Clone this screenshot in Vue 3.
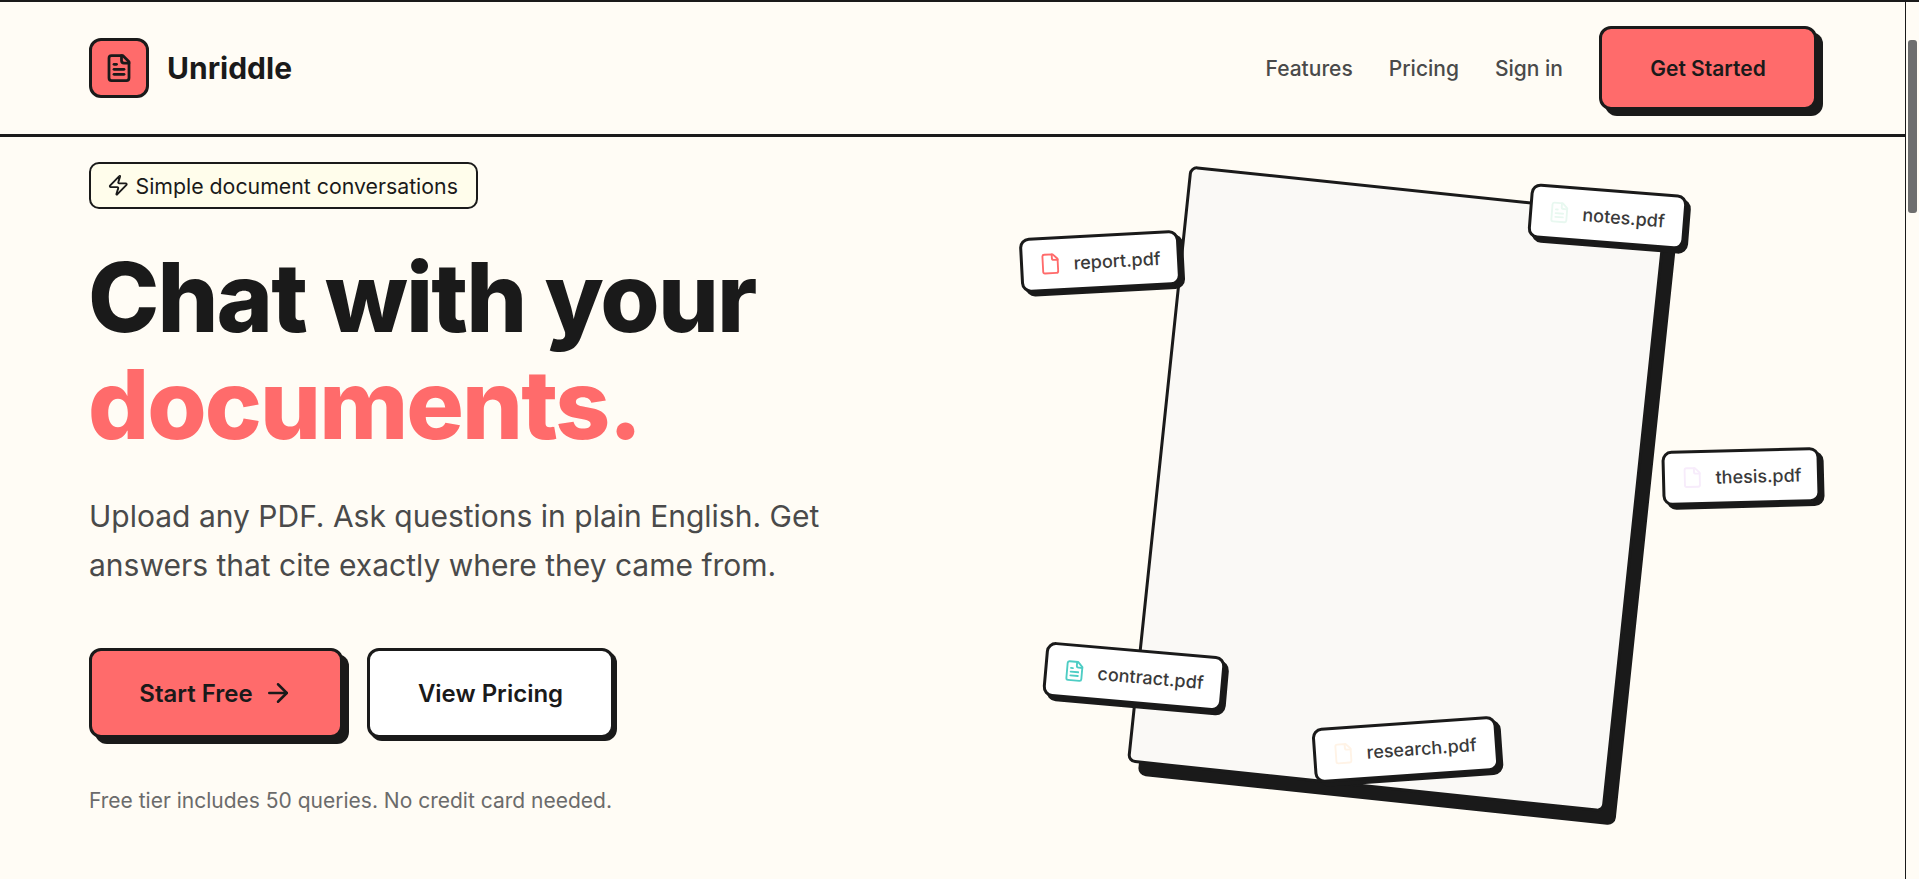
<script setup>
const chips = [
  { name: 'report.pdf', cls: 'report', lines: false },
  { name: 'notes.pdf', cls: 'notes', lines: true },
  { name: 'thesis.pdf', cls: 'thesis', lines: false },
  { name: 'contract.pdf', cls: 'contract', lines: true },
  { name: 'research.pdf', cls: 'research', lines: false },
]
</script>

<template>
  <div class="root">
    <div class="page">
      <header class="nav">
        <div class="brand">
          <span class="logo">
            <svg width="30" height="30" viewBox="0 0 24 24" fill="none" stroke="#1a1a1a" stroke-width="2.2" stroke-linecap="round" stroke-linejoin="round">
              <path d="M15 2H6a2 2 0 0 0-2 2v16a2 2 0 0 0 2 2h12a2 2 0 0 0 2-2V7Z" />
              <path d="M14 2v4a2 2 0 0 0 2 2h4" />
              <path d="M10 9H8" /><path d="M16 13H8" /><path d="M16 17H8" />
            </svg>
          </span>
          <span class="name">Unriddle</span>
        </div>
        <nav class="links">
          <a>Features</a>
          <a>Pricing</a>
          <a>Sign in</a>
          <button class="btn small coral">Get Started</button>
        </nav>
      </header>

      <main class="hero">
        <section class="copy">
          <div class="badge">
            <svg width="22.5" height="22.5" viewBox="0 0 24 24" fill="none" stroke="#1a1a1a" stroke-width="2" stroke-linecap="round" stroke-linejoin="round">
              <path d="M4 14a1 1 0 0 1-.78-1.63l9.9-10.2a.5.5 0 0 1 .86.46l-1.92 6.02A1 1 0 0 0 13 10h7a1 1 0 0 1 .78 1.63l-9.9 10.2a.5.5 0 0 1-.86-.46l1.92-6.02A1 1 0 0 0 11 14z" />
            </svg>
            <span>Simple document conversations</span>
          </div>
          <h1>Chat with your<br /><em>documents.</em></h1>
          <p class="lead">Upload any PDF. Ask questions in plain English. Get answers that cite exactly where they came from.</p>
          <div class="actions">
            <button class="btn big coral">
              Start Free
              <svg width="30" height="30" viewBox="0 0 24 24" fill="none" stroke="#1a1a1a" stroke-width="2" stroke-linecap="round" stroke-linejoin="round">
                <path d="M5 12h14" /><path d="m12 5 7 7-7 7" />
              </svg>
            </button>
            <button class="btn big white">View Pricing</button>
          </div>
          <p class="note">Free tier includes 50 queries. No credit card needed.</p>
        </section>

        <section class="scene">
          <div class="sheet"></div>
          <div v-for="c in chips" :key="c.name" class="chip" :class="c.cls">
            <svg width="22.5" height="22.5" viewBox="0 0 24 24" fill="none" stroke="currentColor" stroke-width="2" stroke-linecap="round" stroke-linejoin="round">
              <path d="M15 2H6a2 2 0 0 0-2 2v16a2 2 0 0 0 2 2h12a2 2 0 0 0 2-2V7Z" />
              <path d="M14 2v4a2 2 0 0 0 2 2h4" />
              <template v-if="c.lines">
                <path d="M10 9H8" /><path d="M16 13H8" /><path d="M16 17H8" />
              </template>
            </svg>
            <span>{{ c.name }}</span>
          </div>
        </section>
      </main>
    </div>

    <aside class="bar"><div class="thumb"></div></aside>
  </div>
</template>

<style>
html, body { margin: 0; background: #fffcf5; overflow: hidden; }
</style>

<style scoped>
.root {
  display: flex;
  height: 879px;
  box-sizing: border-box;
  border-top: 2px solid #1a1a1a;
  background: #fffcf5;
  color: #1a1a1a;
  font-family: Inter, "Noto Sans", sans-serif;
  overflow: hidden;
}
.page { flex: 1; min-width: 0; }
.bar {
  width: 14px;
  box-sizing: border-box;
  border-left: 1px solid #1a1a1a;
  padding: 38px 2px 0 2px;
  background: #fffcf5;
}
.thumb { width: 9px; height: 173px; border-radius: 3px; background: #6e6e6e; }

.nav {
  height: 135px;
  box-sizing: border-box;
  border-bottom: 3px solid #1a1a1a;
  padding: 0 88px 0 89px;
  display: flex;
  align-items: center;
  justify-content: space-between;
}
.brand { display: flex; align-items: center; gap: 18px; }
.logo {
  width: 60px;
  height: 60px;
  box-sizing: border-box;
  border: 3px solid #1a1a1a;
  border-radius: 12px;
  background: #ff6b6b;
  display: flex;
  align-items: center;
  justify-content: center;
}
.name { font-size: 30px; font-weight: 700; }
.links { display: flex; align-items: center; gap: 36px; font-size: 21px; font-weight: 500; color: #4a4a4a; }

.btn {
  box-sizing: border-box;
  border: 3px solid #1a1a1a;
  border-radius: 12px;
  font-family: inherit;
  font-weight: 600;
  color: #1a1a1a;
  display: inline-flex;
  align-items: center;
  justify-content: center;
}
.coral { background: #ff6b6b; box-shadow: 6px 6px 0 #1a1a1a; }
.white { background: #fff; box-shadow: 3px 3px 0 #1a1a1a; }
.small { width: 218px; height: 84px; font-size: 21px; }
.big { height: 90px; font-size: 24px; gap: 10px; }
.big.coral { width: 254px; }
.big.white { width: 247px; margin-left: -2px; }

.hero { display: flex; padding: 25px 89px 0; }
.copy { width: 800px; flex: none; }
.badge {
  display: inline-flex;
  align-items: center;
  gap: 6px;
  height: 47px;
  box-sizing: border-box;
  padding: 0 18px 0 16px;
  border: 2px solid #1a1a1a;
  border-radius: 10px;
  background: #fffdeb;
  font-size: 21.3px;
  font-weight: 400;
}
h1 {
  margin: 35px 0 0 -1px;
  font-size: 96px;
  line-height: 106.5px;
  font-weight: 800;
  letter-spacing: -1.9px;
}
h1 em { font-style: normal; color: #ff6b6b; }
.lead {
  margin: 35px 0 0;
  width: 760px;
  font-size: 30px;
  line-height: 49px;
  color: #4a4a4a;
}
.actions { display: flex; gap: 26px; margin-top: 58px; }
.note { margin: 48px 0 0; font-size: 21px; line-height: 30px; color: #6b6b6b; }

.scene { position: relative; flex: 1; height: 700px; }
.sheet {
  position: absolute;
  left: 268px;
  top: 27px;
  width: 480px;
  height: 600px;
  box-sizing: border-box;
  border: 3px solid #1a1a1a;
  border-radius: 8px;
  background: #faf9f6;
  box-shadow: 12px 12px 0 #1a1a1a;
  transform: rotate(6deg);
}
.chip {
  position: absolute;
  height: 55px;
  box-sizing: border-box;
  padding: 0 16px;
  border: 3px solid #1a1a1a;
  border-radius: 10px;
  background: #fff;
  box-shadow: 4px 4px 0 #1a1a1a;
  display: flex;
  align-items: center;
  gap: 12px;
  font-size: 18px;
  font-weight: 500;
  white-space: nowrap;
}
.chip svg { flex: none; }
.report { left: 131px; top: 72px; width: 160px; transform: rotate(-3deg); color: #ff6b6b; }
.notes { left: 640px; top: 27px; width: 157px; transform: rotate(4.5deg); color: #e8f8f0; }
.thesis { left: 773px; top: 287px; width: 158px; transform: rotate(-1.5deg); color: #f7ecfb; }
.contract { left: 155px; top: 487px; width: 180px; transform: rotate(5deg); color: #4ecdc4; }
.research { left: 424px; top: 560px; width: 185px; transform: rotate(-4deg); color: #fff3e6; }
.chip span { color: #3a3a3a; }
</style>
